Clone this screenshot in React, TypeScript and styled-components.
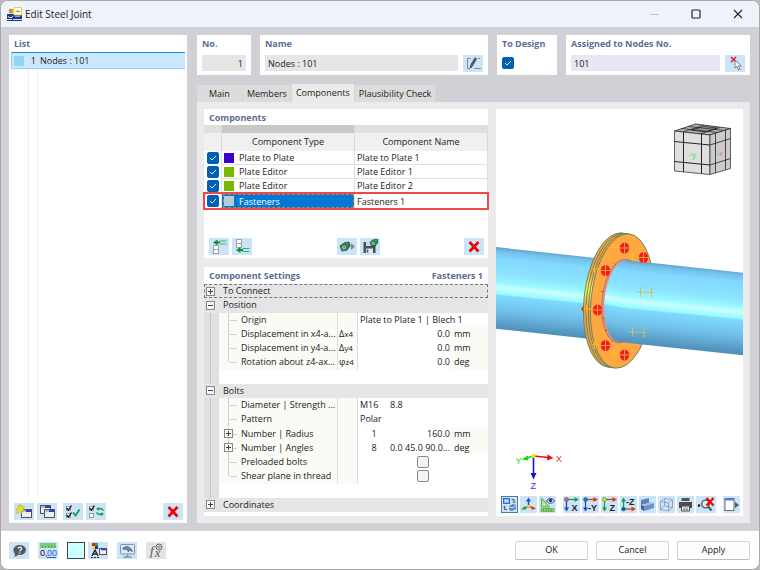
import React from "react";
import styled, { createGlobalStyle, css } from "styled-components";

const Global = createGlobalStyle`
  *, *::before, *::after { box-sizing: border-box; }
  body { margin: 0; background: #b9b8bb; }
  body, button, input, table { font-family: "Open Sans", "Noto Sans", sans-serif; font-size: 9px; line-height: 14px; color: #222; }
  button { padding: 0; border: 0; background: none; }
  svg { display: block; }
`;

/* ---------- window frame ---------- */

const Window = styled.div`
  min-height: 100vh;
  display: flex;
  flex-direction: column;
  background: #fff;
  border: 1px solid #a9a9ad;
  border-radius: 8px;
  overflow: hidden;
`;

const TitleBar = styled.header`
  display: flex;
  align-items: center;
  flex: none;
  height: 26px;
  padding: 0 0 0 6px;
  background: #eef2f9;
`;

const Title = styled.h1`
  margin: 0 auto 0 3px;
  font-size: 10px;
  font-weight: 400;
`;

const CaptionButton = styled.button`
  width: 42px;
  height: 26px;
  display: grid;
  place-items: center;
`;

const Body = styled.main`
  flex: 1;
  display: grid;
  grid-template-columns: 178px 1fr;
  gap: 10px;
  padding: 8px 9px 8px 8px;
  background: #d1d0d6;
`;

const Footer = styled.footer`
  display: flex;
  align-items: center;
  gap: 9px;
  flex: none;
  height: 38px;
  padding: 0 9px 0 8px;
`;

/* ---------- shared parts ---------- */

const Panel = styled.section`
  background: #fff;
  min-width: 0;
  display: flex;
  flex-direction: column;
`;

const Caption = styled.h2`
  display: flex;
  justify-content: space-between;
  margin: 0;
  padding: 1px 5px 0;
  font-size: 9px;
  line-height: 15px;
  font-weight: 700;
  color: #5c6c94;
`;

const Tool = styled.button<{ $tone?: "plain" | "selected" | "disabled"; $narrow?: boolean }>`
  flex: none;
  display: grid;
  place-items: center;
  width: ${(p) => (p.$narrow ? "17px" : "20px")};
  height: 17px;
  background: ${(p) => (p.$tone === "disabled" ? "#e4e4e4" : "#cce4f7")};
  ${(p) => p.$tone === "selected" && css`border: 1px solid #3c7fb1;`}
`;

const Swatch = styled.button`
  width: 18px;
  height: 17px;
  background: #ccffff;
  border: 1px solid #444;
`;

const ToolBar = styled.div`
  display: flex;
  gap: 3px;
  padding: 0 4px 3px 5px;
`;

const CompTools = styled(ToolBar)`
  justify-content: space-between;
  padding-top: 29px;
`;

const ToolGroup = styled.div<{ $gap?: number }>`
  display: flex;
  gap: ${(p) => p.$gap ?? 3}px;
`;

const Spacer = styled.div`
  flex: 1;
`;

const Actions = styled.div`
  display: flex;
  gap: 8px;
`;

const DialogButton = styled.button`
  width: 73px;
  height: 19px;
  background: #fdfdfd;
  border: 1px solid #d3d3d3;
  border-bottom-color: #bdbdbd;
  border-radius: 2px;
`;

const Check = styled.input`
  appearance: none;
  display: block;
  flex: none;
  width: 12px;
  height: 12px;
  margin: 0;
  border: 1px solid #8a8a8a;
  border-radius: 2px;
  background: #f3f3f3;
  &:checked {
    border-color: #0060b8;
    background: #0060b8
      url("data:image/svg+xml,%3Csvg xmlns='http://www.w3.org/2000/svg' viewBox='0 0 10 10'%3E%3Cpath d='M2 5l2 2 4-4' fill='none' stroke='white' stroke-width='.9'/%3E%3C/svg%3E")
      center / 10px 10px no-repeat;
  }
`;

/* ---------- list ---------- */

const NodeList = styled.ul`
  flex: 1;
  list-style: none;
  margin: 1px 2px 8px;
  padding: 0;
  background: linear-gradient(#eee, #eee) 17px 0 / 1px 100% no-repeat,
    linear-gradient(#eee, #eee) 26px 0 / 1px 100% no-repeat;
`;

const NodeItem = styled.li`
  display: grid;
  grid-template-columns: 10px 12px 1fr;
  align-items: center;
  height: 17px;
  padding-left: 2px;
  background: #cce8ff;
  border: 0 solid #9dcdf1;
  border-width: 1px 0 1px 1px;
  border-top-color: #1c8ae0;
`;

const ColorBox = styled.span<{ $color: string }>`
  display: block;
  width: 10px;
  height: 10px;
  background: ${(p) => p.$color};
`;

const Num = styled.span`
  text-align: right;
`;

const ItemName = styled.span`
  padding-left: 4px;
`;

/* ---------- right side ---------- */

const Right = styled.div`
  display: flex;
  flex-direction: column;
  min-width: 0;
`;

const Fields = styled.div`
  display: grid;
  grid-template-columns: 54px 228px 60px 1fr;
  gap: 8px 9px;
  height: 40px;
`;

const FieldLabel = styled.label`
  padding: 1px 5px 0;
  font-weight: 700;
  line-height: 16px;
  color: #5c6c94;
`;

const FieldRow = styled.div`
  display: flex;
  gap: 5px;
  padding: 3px 5px 4px;
  height: 23px;
  align-items: center;
`;

const TextBox = styled.input<{ $tint?: boolean; $right?: boolean }>`
  flex: 1;
  min-width: 0;
  height: 16px;
  padding: 0 3px;
  border: 0;
  background: ${(p) => (p.$tint ? "#e6e7f2" : "#e6e6e6")};
  text-align: ${(p) => (p.$right ? "right" : "left")};
`;

const Tabs = styled.div`
  display: flex;
  align-items: flex-end;
  height: 18px;
  margin-top: 9px;
`;

const Tab = styled.button<{ $active?: boolean; $pad: number }>`
  height: ${(p) => (p.$active ? 18 : 17)}px;
  padding: 0 ${(p) => p.$pad}px;
  background: ${(p) => (p.$active ? "#ebebeb" : "#dcdcdc")};
  border-right: 1px solid #d6d6d6;
`;

const TabPage = styled.div`
  flex: 1;
  display: grid;
  grid-template-columns: 284px 1fr;
  gap: 8px;
  padding: 7px;
  background: #ebebeb;
`;

const Column = styled.div`
  display: flex;
  flex-direction: column;
  gap: 9px;
`;

const CompTable = styled.table`
  width: 100%;
  border-spacing: 0;
  table-layout: fixed;
  th { height: 18px; padding: 0; font-weight: 400; background: #f0f0f0; border-right: 1px solid #dadada; }
  td { height: 14px; padding: 0 3px 0 2px; line-height: 13px; border-right: 1px solid #e0e0e0; border-bottom: 1px solid #e0e0e0; }
  td:first-child { padding: 0 0 0 3px; border-bottom: 0; }
`;

const Marker = styled.tr`
  && th { height: 8px; background: #e0e0e0; }
  && th:nth-child(2) { background: #c8c8c8; }
`;

const CompRow = styled.tr<{ $selected?: boolean }>`
  ${(p) =>
    p.$selected &&
    css`
      outline: 2px solid #f04848;
      outline-offset: -1px;
      && td { height: 16px; border-bottom: 0; }
      td:nth-child(2) { background: #0078d7; color: #fff; outline: 1px dashed #c98240; outline-offset: -2px; }
    `}
`;

const TypeCell = styled.div`
  display: flex;
  align-items: center;
  gap: 5px;
`;

/* ---------- settings tree ---------- */

const SetTable = styled.table`
  width: 100%;
  height: 228px;
  margin: 1px 0 4px;
  border-spacing: 0;
  table-layout: fixed;
  td, th { padding: 0; height: 14px; line-height: 14px; font-weight: 400; text-align: left; white-space: nowrap; }
`;

const Gutter = styled.td`
  background: linear-gradient(#c4c4c4, #c4c4c4) 6px 0 / 1px 100% no-repeat, #e0e0e0;
`;

const GroupHead = styled.th<{ $focus?: boolean }>`
  background: #e5e5e5;
  ${(p) => p.$focus && css`outline: 1px dashed #777; outline-offset: -1px;`}
`;

const GroupLine = styled.div`
  display: flex;
  align-items: center;
  gap: 8px;
  padding-left: 2px;
`;

const Toggle = styled.button`
  flex: none;
  width: 9px;
  height: 9px;
  background: #f6f6f6;
  border: 1px solid #888;
`;

const NameCell = styled.td`
  background: #fafbf5;
`;

const NameLine = styled.div`
  display: flex;
  align-items: center;
`;

const Branch = styled.span<{ $last?: boolean }>`
  flex: none;
  display: flex;
  align-items: center;
  width: 22px;
  height: 14px;
  padding-left: 5px;
  background: linear-gradient(#cfcfcf, #cfcfcf) 9px 0 / 1px ${(p) => (p.$last ? "7px" : "100%")} no-repeat,
    linear-gradient(#cfcfcf, #cfcfcf) 11px 7px / 7px 1px no-repeat;
`;

const SymbolCell = styled.td`
  background: #fafbf5;
  border: 0 solid #dcdcdc;
  border-width: 0 1px;
  && { padding-left: 1px; }
  small { font-size: 8px; }
`;

const Value = styled.td<{ $align?: "right" | "center" }>`
  && { padding: 0 0 0 2px; text-align: ${(p) => p.$align ?? "left"}; }
`;

const Unit = styled.td<{ $filled?: boolean }>`
  && { padding-left: 4px; }
  background: ${(p) => (p.$filled ? "#fafbf5" : "#fff")};
`;

const CheckHolder = styled.span`
  display: flex;
  padding-left: 27px;
`;

/* ---------- 3D view ---------- */

const Scene = styled.svg`
  flex: 1 1 0;
  width: 100%;
  height: 0;
  min-height: 0;
  font-family: "Liberation Sans", sans-serif;
`;

const ViewBar = styled.div`
  display: flex;
  justify-content: space-between;
  padding: 3px 3px 3px 5px;
`;

/* ---------- icons ---------- */

const Ico = ({ children, w = 18 }: { children: React.ReactNode; w?: number }) => (
  <svg width={w} height="15" viewBox={`0 0 ${w} 15`} fill="none" aria-hidden="true">{children}</svg>
);

const AppIcon = () => (
  <svg width="15" height="15" viewBox="0 0 15 15" aria-hidden="true">
    <path d="M0 7h7l8 1v6H0z" fill="#1f3a83" />
    <circle cx="4" cy="4" r="2.4" fill="#d6b13c" />
    <path d="M2 2l2 2 2-2M2 6l2-1 2 1" stroke="#8f7a30" strokeWidth=".7" fill="none" />
    <path d="M7 .5h7.5V8H7z" fill="#fff" stroke="#f5d021" />
    <path d="M8.500 5c1-2 4-2 5 0l-2-.5-.5 1.500-.5-1.500z" fill="#5c7bb0" />
    <path d="M1 9l1 1.500h3L6 9M6 12.500h9M0 12.500h5" stroke="#dfe8f7" fill="none" />
    <path d="M8 9.500h5" stroke="#92abdb" />
  </svg>
);

const CrossIcon = () => (
  <Ico><path d="M4.500 3l9 9.500M13.500 3l-9 9.500" stroke="#f20000" strokeWidth="2.700" /></Ico>
);

const MiniWin = ({ x, y }: { x: number; y: number }) => (
  <g>
    <rect x={x + 0.5} y={y + 0.5} width="10" height="8" fill="#eee" stroke="#555" />
    <path d={`M${x + 1} ${y + 2}h9`} stroke="#b7bcc6" strokeWidth="2" />
    <path d={`M${x + 5} ${y + 2}h5`} stroke="#2a3cc8" strokeWidth="2" />
  </g>
);

const NewIcon = () => (
  <Ico>
    <MiniWin x={6} y={5} />
    <path d="M5.500 0l1 3 3-1-1.500 3 2 1.500-3 .5-.5 3-2-2-3 1.500 1-3L.5 5l3-.5L3 1.500l2 1z" fill="#e7e32a" stroke="#a8a41c" strokeWidth=".5" />
  </Ico>
);
const CopyIcon = () => <Ico><MiniWin x={2} y={1} /><MiniWin x={6} y={5} /></Ico>;

const Tick = ({ y, off }: { y: number; off?: boolean }) => (
  <g>
    <rect x="2.500" y={y + 0.5} width="4" height="4" fill="#fff" stroke="#999" />
    {!off && <path d={`M2.500 ${y + 2}l2 2 3-4.500`} stroke="#111" strokeWidth="1.300" />}
  </g>
);
const CheckAllIcon = () => (
  <Ico><Tick y={2} /><Tick y={9} /><path d="M9 8.500l2.500 3 4-6" stroke="#17a04c" strokeWidth="1.900" /></Ico>
);
const CheckSwapIcon = () => (
  <Ico>
    <Tick y={2} /><Tick y={9} off />
    <path d="M11 5c2-1 4-.5 5.500 1.500M15 10c-2 1-4 .5-5.500-1.500" stroke="#17a04c" strokeWidth="1.400" />
    <path d="M12 3v4L9 5zM14 8v4l3-2z" fill="#17a04c" />
  </Ico>
);

const InsertIcon = ({ below }: { below?: boolean }) => {
  const y = below ? 11 : 3.5;
  return (
    <Ico>
      <path d={below ? "M3.500.5h5v4h-5zM3.500 4.500h5v4h-5z" : "M3.500 6.500h5v4h-5zM3.500 10.500h5v4h-5z"} fill="#fafafa" stroke="#a0a0a0" />
      <path d={`M7 ${y}h3`} stroke="#0a9040" strokeWidth="2.200" />
      <path d={`M9.500 ${y - 1.5}h7M9.500 ${y + 1.5}h7`} stroke="#3cae6c" />
      <path d={`M7.500 ${y - 3}v6L3 ${y}z`} fill="#0a9040" />
    </Ico>
  );
};

const Block = ({ x, y, s = 1 }: { x: number; y: number; s?: number }) => (
  <g transform={`translate(${x} ${y}) scale(${s})`}>
    <path d="M0 4l4-3 5-1 1 4-3 4-5 1z" fill="#2e7d4f" stroke="#184a2d" strokeWidth=".8" />
    <path d="M2 4.500l3-1 1 3-3 1zM6 2l2-.5" fill="#5fae7c" stroke="#9ad4ae" strokeWidth=".6" />
  </g>
);
const BlockIcon = () => <Ico><Block x={2} y={3} /><path d="M13 4l4 3.500-4 3.500z" fill="#7c8791" /></Ico>;
const SaveIcon = () => (
  <Ico>
    <path d="M2.500 3h10l2 2v9h-12z" fill="#4c4f55" />
    <path d="M5 3h6v4H5z" fill="#cfd9e2" /><path d="M5 9.500h7V14H5z" fill="#dce8f2" /><path d="M6.500 10.500v3" stroke="#4c4f55" strokeWidth="1.500" />
    <Block x={9} y={0} s={0.8} />
  </Ico>
);
const EditIcon = () => (
  <Ico>
    <path d="M7 2.500H3.500v10H6M14 2.500h2M10 12.500h7" stroke="#858d94" />
    <path d="M12 2L7.500 9.500" stroke="#55595d" strokeWidth="2.800" /><path d="M5.800 12.500l.5-3.500 2.500 1.500z" fill="#333" />
  </Ico>
);
const PickIcon = () => (
  <Ico>
    <path d="M5 1l5 5M10 1l-5 5" stroke="#e02323" strokeWidth="1.600" />
    <path d="M9 4v8l2-1.500 1.500 3.500 1.500-.7-1.500-3.300h2.800z" fill="#fff" stroke="#666" strokeWidth=".8" />
  </Ico>
);
const HelpIcon = () => (
  <Ico>
    <path d="M9.500 2a6 5 0 1 1-1.500 9.700c-1 1.500-3 2-4 1.800 1-.8 1.200-1.800.8-3C1.500 7 4.500 2 9.500 2z" fill="#55585c" />
    <path d="M8 5.500c.5-2 4-1.500 3.500.5-.3 1-1.500 1-1.700 2.500M9.600 9.500v1.300" stroke="#dcebf7" strokeWidth="1.400" />
  </Ico>
);
const UnitsIcon = () => (
  <Ico>
    <path d="M1 0h16v5H1z" fill="#7ccc7c" /><path d="M3.500 2.500v2.500M6.500 2.500v2.500M9.500 2.500v2.500M12.500 2.500v2.500M15.500 2.500v2.500" stroke="#459a48" strokeWidth=".7" />
    <text x="1" y="13" fontSize="9" fill="#111" fontFamily="Liberation Sans, sans-serif">0,</text>
    <text x="8" y="13" fontSize="9" fill="#2a62c8" fontFamily="Liberation Sans, sans-serif">00</text>
    <path d="M8 14.500h9" stroke="#2a62c8" />
  </Ico>
);
const DisplayIcon = () => (
  <Ico>
    <path d="M3 0h3v3H3z" fill="#e02020" /><path d="M6 0h3v3H6z" fill="#22b422" /><path d="M3 3h3v3H3z" fill="#efdf20" /><path d="M6 3h3v3H6z" fill="#2626d8" />
    <path d="M3 13l3-6 3 6M4 11h4" stroke="#222" strokeWidth="1.300" /><path d="M2 14.500h8" stroke="#222" strokeDasharray="2 1" />
    <rect x="10.500" y="5.500" width="7" height="6" fill="#eee" stroke="#555" /><path d="M12 6.500h5" stroke="#2a3cc8" strokeWidth="1.500" />
  </Ico>
);
const MonitorIcon = () => (
  <Ico>
    <rect x="2.500" y="1.500" width="14" height="9.500" rx="1" fill="#dbe9f5" stroke="#8493a0" />
    <path d="M9.500 11v2.500M5.500 14h8" stroke="#8493a0" strokeWidth="1.300" />
    <path d="M4.500 6C7 2 12.500 3 14.500 8.500l-3-1.500-1 2-1.500-2.500z" fill="#5f8fbc" stroke="#284e78" strokeWidth=".6" />
  </Ico>
);
const FormulaIcon = () => (
  <Ico>
    <text x="3" y="12" fontSize="13" fontStyle="italic" fill="#555" fontFamily="Liberation Serif, serif">f</text>
    <text x="8" y="14" fontSize="12" fontStyle="italic" fill="#555" fontFamily="Liberation Serif, serif">x</text>
    <circle cx="12" cy="4" r="3" stroke="#666" /><path d="M10 4h4M12 2v4" stroke="#777" strokeWidth=".8" />
  </Ico>
);

const SyncIcon = () => (
  <Ico w={15}>
    <rect x="1.500" y="1.500" width="6" height="5" fill="#8db4ff" stroke="#3566d8" /><path d="M3 4h3" stroke="#fff" />
    <path d="M9.500 2.500h2.500v2M5 12.500H2.500v-2" stroke="#555" /><path d="M10.500 4.500h3L12 6.500zM1 10.500h3L2.500 8.500z" fill="#555" />
    <path d="M7 9l4-2 3 1v4l-4 2-3-1z" fill="#6688b8" /><path d="M7 10l3 1 4-2" stroke="#c9d9ee" />
  </Ico>
);
const AxesIcon = () => (
  <Ico w={15}>
    <path d="M7.500 10V3" stroke="#2448c8" strokeWidth="1.400" /><path d="M5 4.500l2.500-4 2.500 4z" fill="#2448c8" />
    <path d="M7.500 9.500L3 11.500" stroke="#17a04c" strokeWidth="1.400" /><path d="M0 12.500l4-3.500 1 3.500z" fill="#17a04c" />
    <path d="M7.500 9.500l5 1.500" stroke="#d84018" strokeWidth="1.400" /><path d="M15 11.500l-4.500 1.500.7-3.800z" fill="#d84018" />
    <circle cx="7.500" cy="9.500" r="1.700" fill="#f5c518" />
  </Ico>
);
const MeasureIcon = () => (
  <Ico w={15}>
    <path d="M1.500 1l8 9h-8z" fill="#a6dd98" stroke="#5cae4c" /><path d="M3.500 5.500l2 2.500h-2z" fill="#e3f3fb" /><path d="M1 11.500h13v3H1z" fill="#8fd380" stroke="#5cae4c" strokeWidth=".8" />
    <path d="M3.500 12v2M6 12v2M8.500 12v2M11 12v2" stroke="#3c8030" strokeWidth=".7" />
    <path d="M6.500 4c2-3.500 6-3.500 8 0-2 3-6 3-8 0z" fill="#eef" stroke="#334a7c" /><circle cx="10.500" cy="3.500" r="1.800" fill="#253a70" />
  </Ico>
);
const AxisView = ({ l, h, v, up, dot }: { l: string; h: string; v: string; up?: boolean; dot: string }) => {
  const y = up ? 12 : 2.5;
  return (
    <Ico w={15}>
      <path d={`M4 ${y}h8`} stroke={h} strokeWidth="1.300" /><path d={`M10.500 ${y - 2.5}l4.500 2.500-4.500 2.500z`} fill={h} />
      <path d="M2.500 3v9" stroke={v} strokeWidth="1.300" /><path d={up ? "M0 4.500L2.500.5l2.500 4z" : "M0 10.500l2.500 4 2.500-4z"} fill={v} />
      <circle cx="2.500" cy={y} r="1.900" fill={dot} stroke={v} strokeWidth=".7" />
      <text x={l.length > 1 ? 5 : 7.5} y={up ? 8 : 13.5} fontSize="9" fontWeight="700" fill="#222" fontFamily="Liberation Sans, sans-serif">{l}</text>
    </Ico>
  );
};
const SolidIcon = () => (
  <Ico w={15}>
    <path d="M1 3l8-2v5l-8 2z" fill="#5f83b8" /><path d="M4 9l10-3v5L4 14z" fill="#6d92c6" /><path d="M1 8l3 1v5l-3-2z" fill="#3f628f" /><path d="M4 9l10-3-3-1-8 3z" fill="#a7c1e2" />
  </Ico>
);
const WireIcon = () => (
  <Ico w={15}>
    <path d="M1.500 4.500l4-3 8 1v8l-4 3.500-8-1.500zM1.500 4.500l8 1.500 4-3.500M9.500 6v8M5.500 1.500v7.500l8 1.500M5.500 9l-4 3.500" stroke="#8f9ac0" strokeWidth=".9" fill="#dfe9f5" fillOpacity=".4" />
  </Ico>
);
const PrintIcon = () => (
  <Ico w={15}>
    <path d="M3.500 1h8v3h-8z" fill="#555" /><path d="M1 5h13v6H1z" fill="#4d4d4d" /><path d="M3.500 9h8v5h-8z" fill="#ececec" stroke="#4d4d4d" /><path d="M5 11h5M5 12.500h5" stroke="#777" strokeWidth=".7" />
  </Ico>
);
const ZoomOffIcon = () => (
  <Ico>
    <circle cx="2" cy="8.500" r="1.200" fill="#111" />
    <circle cx="8.500" cy="7" r="3.800" fill="#dcebf7" stroke="#555" strokeWidth="1.300" /><path d="M11 9.500l3.500 4" stroke="#555" strokeWidth="2" />
    <path d="M9.500 1l7 7.500M16.500 1l-7 7.500" stroke="#f20000" strokeWidth="2.200" />
  </Ico>
);
const PanelIcon = () => (
  <Ico w={15}>
    <rect x="1" y="1.500" width="9" height="12" fill="#fff" stroke="#667" /><path d="M1 2.500h9" stroke="#4b82d8" strokeWidth="2" /><path d="M11 5l4 3-4 3z" fill="#555" />
  </Ico>
);

/* ---------- drawing of the joint ---------- */

const bolts = [[624.5, 248], [643.5, 257.5], [605.5, 270.5], [597.5, 310], [605.5, 345.5], [624.5, 355]];
const pins = [[613.5, 247.5], [632.5, 256.5], [594.5, 269], [586.5, 309], [594.5, 345], [613.5, 353.5]];

const shade = (
  <>
    <stop offset="0" stopColor="#5e9fc6" />
    <stop offset=".05" stopColor="#74c1ec" />
    <stop offset=".14" stopColor="#82d9ff" />
    <stop offset=".32" stopColor="#8ce2ff" />
    <stop offset=".43" stopColor="#98f8ff" />
    <stop offset=".49" stopColor="#c9ffff" />
    <stop offset=".57" stopColor="#96fbff" />
    <stop offset=".59" stopColor="#80dafb" />
    <stop offset=".78" stopColor="#70c0ea" />
    <stop offset="1" stopColor="#508fb8" />
  </>
);

const Joint = () => (
  <Scene viewBox="496 109 247 384" preserveAspectRatio="xMidYMid slice" role="img" aria-label="3D view of the joint">
    <defs>
      <linearGradient id="pipeL" gradientUnits="userSpaceOnUse" x1="496" y1="247" x2="488" y2="328">{shade}</linearGradient>
      <linearGradient id="pipeR" gradientUnits="userSpaceOnUse" x1="626" y1="260" x2="618" y2="342">{shade}</linearGradient>
      <linearGradient id="rim" x1="0" y1="0" x2="0" y2="1">
        <stop offset=".3" stopColor="#f4a23c" /><stop offset=".44" stopColor="#fff04a" /><stop offset=".58" stopColor="#f4a23c" />
      </linearGradient>
    </defs>
    <path d="M480 245.300L600 258.500V340L480 327z" fill="url(#pipeL)" />
    <circle cx="584" cy="309" r="2.500" fill="#e22" />
    <g stroke="#4f7d6b" strokeWidth=".8">
      <ellipse cx="615" cy="300" rx="31" ry="67.500" transform="rotate(6 615 300)" fill="url(#rim)" />
      <ellipse cx="617.500" cy="300.500" rx="31" ry="67.500" transform="rotate(6 617.500 300.500)" fill="url(#rim)" />
      <ellipse cx="620" cy="300.700" rx="31" ry="67.500" transform="rotate(6 620 300.700)" fill="url(#rim)" />
      <ellipse cx="622" cy="301" rx="31" ry="67.500" transform="rotate(6 622 301)" fill="#ffa842" />
    </g>
    <ellipse cx="622" cy="301" rx="20" ry="42" transform="rotate(6 622 301)" fill="#f28a84" stroke="#8b6f6a" strokeWidth=".7" />
    <ellipse cx="623" cy="301" rx="18.500" ry="41" transform="rotate(6 623 301)" fill="url(#pipeR)" />
    <path d="M627 260.200L760 274.500V357L619 342z" fill="url(#pipeR)" />
    <path d="M604 318l-2 .5M603 292l-2-1M609 276l-2-1.500M616 265l-1.500-1.500M607 330l-2 1M613 340l-1.500 1.500" stroke="#805a5a" />
    {bolts.map(([x, y]) => (
      <g key={`${x}-${y}`}>
        <ellipse cx={x} cy={y} rx="4.700" ry="5.600" fill="#f41d1d" />
        <path d={`M${x - 5} ${y}h10M${x} ${y - 5.5}v11`} stroke="#ff9a3c" />
      </g>
    ))}
    {pins.map(([x, y]) => (
      <path key={`${x}-${y}`} d={`M${x - 3} ${y}h9M${x} ${y - 4}v8`} stroke="#ffc21a" strokeWidth=".9" />
    ))}
    <path d="M636.500 291.700l17.500 1M640.500 286.500v10.500M651.500 287.500v10.500M628.500 331.700l17 1M632.500 326.500v10M644 328v10" stroke="#d3bd62" />

    <g stroke="#222" strokeLinejoin="round">
      <path d="M674.500 131l21-7 35 4.500-20.500 6.500z" fill="#b4b4b4" strokeWidth=".8" />
      <path d="M691 130l13-3.500 13 1.500-12 4z" fill="#9a9a9c" strokeWidth=".8" />
      <path d="M681.500 128.500l37 4M688.500 126.500l36 4M683.500 132l20-7M700 134l20-6.500" strokeWidth=".7" />
      <path d="M674.500 131l35.500 4v39.500l-35.500-3.500z" fill="#dfdfdf" strokeWidth=".7" />
      <path d="M710 135l20.500-6.500v40l-20.500 6z" fill="#cbcbcb" strokeWidth=".7" />
      <path d="M683.500 132v40M701.500 134v39.500M674.500 141.500l35.500 3.500M674.500 161.500l35.500 3.500" />
      <path d="M715.500 133.500v39.500M725.500 130v40M710 145l20.500-6.500M710 165l20.500-6.500" strokeWidth=".8" />
    </g>
    <text x="688.500" y="157.500" fontSize="9" fontWeight="700" fill="#7fe08c">-y</text>
    <text x="717" y="156" fontSize="7" fontWeight="700" fill="#e08d8d">-x</text>

    <path d="M533.500 456v18" stroke="#1616c4" strokeWidth="1.600" /><path d="M530.500 473h6l-3 6.500z" fill="#1616c4" />
    <path d="M533.500 456l15 1.500" stroke="#e01010" strokeWidth="1.600" /><path d="M547.500 454.500l6 3.500-6.500 2.500z" fill="#e01010" />
    <path d="M533.500 456l-7 2" stroke="#12d812" strokeWidth="1.600" /><path d="M528 455.500l-6.500 4 7 1z" fill="#12d812" />
    <circle cx="533.500" cy="456" r="2" fill="#f5e510" />
    <text x="556" y="462" fontSize="9" fill="#f03030">X</text>
    <text x="515.500" y="464" fontSize="9" fill="#20dc20">Y</text>
    <text x="530.500" y="488.500" fontSize="9" fill="#3434f0">Z</text>
  </Scene>
);

/* ---------- data ---------- */

const components = [
  { type: "Plate to Plate", name: "Plate to Plate 1", color: "#3a00cc" },
  { type: "Plate Editor", name: "Plate Editor 1", color: "#7ab800" },
  { type: "Plate Editor", name: "Plate Editor 2", color: "#7ab800" },
  { type: "Fasteners", name: "Fasteners 1", color: "#b0ced9", selected: true },
];

type Row = {
  name: string; sym?: [string, string]; wide?: string; v1?: string; v2?: string; v2left?: boolean;
  unit?: string; expand?: boolean; check?: boolean; last?: boolean;
};

const position: Row[] = [
  { name: "Origin", wide: "Plate to Plate 1 | Blech 1" },
  { name: "Displacement in x4-a...", sym: ["Δ", "x4"], v2: "0.0", unit: "mm" },
  { name: "Displacement in y4-a...", sym: ["Δ", "y4"], v2: "0.0", unit: "mm" },
  { name: "Rotation about z4-ax...", sym: ["φ", "z4"], v2: "0.0", unit: "deg", last: true },
];

const boltRows: Row[] = [
  { name: "Diameter | Strength ...", v1: "M16", v2: "8.8", v2left: true },
  { name: "Pattern", wide: "Polar" },
  { name: "Number | Radius", v1: "1", v2: "160.0", unit: "mm", expand: true },
  { name: "Number | Angles", v1: "8", v2: "0.0 45.0 90.0...", unit: "deg", expand: true },
  { name: "Preloaded bolts", check: true },
  { name: "Shear plane in thread", check: true, last: true },
];

const Expander = ({ open, label }: { open?: boolean; label: string }) => (
  <Toggle aria-label={label} aria-expanded={!!open}>
    <svg width="7" height="7" viewBox="0 0 7 7">
      <path d={open ? "M1 3.500h5" : "M1 3.500h5M3.500 1v5"} stroke="#444" />
    </svg>
  </Toggle>
);

const Group = ({ name, open, focus }: { name: string; open?: boolean; focus?: boolean }) => (
  <tr>
    <GroupHead colSpan={6} $focus={focus}>
      <GroupLine><Expander open={open} label={name} />{name}</GroupLine>
    </GroupHead>
  </tr>
);

const Blank = () => (
  <tr><Gutter /><td colSpan={5} /></tr>
);

const SettingRow = ({ r }: { r: Row }) => {
  const id = r.name.replace(/\W+/g, "-");
  return (
    <tr>
      <Gutter />
      <NameCell>
        <NameLine>
          <Branch $last={r.last}>{r.expand && <Expander label={r.name} />}</Branch>
          {r.check ? <label htmlFor={id}>{r.name}</label> : r.name}
        </NameLine>
      </NameCell>
      <SymbolCell>{r.sym && <>{r.sym[0]}<small>{r.sym[1]}</small></>}</SymbolCell>
      {r.wide ? (
        <Value colSpan={3}>{r.wide}</Value>
      ) : r.check ? (
        <><Value /><Value colSpan={2}><CheckHolder><Check id={id} type="checkbox" /></CheckHolder></Value></>
      ) : (
        <>
          <Value $align={r.v1 && r.v1.length === 1 ? "center" : undefined}>{r.v1}</Value>
          <Value $align={r.v2left ? undefined : "right"}>{r.v2}</Value>
          <Unit $filled={!!r.unit}>{r.unit}</Unit>
        </>
      )}
    </tr>
  );
};

export default function App() {
  return (
    <>
      <Global />
      <Window>
        <TitleBar>
          <AppIcon />
          <Title>Edit Steel Joint</Title>
          <CaptionButton aria-label="Minimize" disabled><svg width="9" height="9"><path d="M0 4.500h9" stroke="#c3c6cc" /></svg></CaptionButton>
          <CaptionButton aria-label="Maximize"><svg width="10" height="10"><rect x="1" y="1" width="8" height="8" rx="1" fill="none" stroke="#222" strokeWidth="1.200" /></svg></CaptionButton>
          <CaptionButton aria-label="Close"><svg width="10" height="10"><path d="M1 1l8 8M9 1L1 9" stroke="#222" strokeWidth="1.100" /></svg></CaptionButton>
        </TitleBar>

        <Body>
          <Panel>
            <Caption>List</Caption>
            <NodeList>
              <NodeItem><ColorBox $color="#8fd8f5" /><Num>1</Num><ItemName>Nodes : 101</ItemName></NodeItem>
            </NodeList>
            <ToolBar>
              <ToolGroup><Tool aria-label="New"><NewIcon /></Tool><Tool aria-label="Copy"><CopyIcon /></Tool></ToolGroup>
              <ToolGroup />
              <ToolGroup><Tool aria-label="Select all"><CheckAllIcon /></Tool><Tool aria-label="Invert selection"><CheckSwapIcon /></Tool></ToolGroup>
              <Spacer />
              <Tool aria-label="Delete"><CrossIcon /></Tool>
            </ToolBar>
          </Panel>

          <Right>
            <Fields>
              <Panel>
                <FieldLabel htmlFor="no">No.</FieldLabel>
                <FieldRow><TextBox id="no" readOnly value="1" $right /></FieldRow>
              </Panel>
              <Panel>
                <FieldLabel htmlFor="name">Name</FieldLabel>
                <FieldRow><TextBox id="name" readOnly value="Nodes : 101" /><Tool aria-label="Edit name"><EditIcon /></Tool></FieldRow>
              </Panel>
              <Panel>
                <FieldLabel htmlFor="design">To Design</FieldLabel>
                <FieldRow><Check id="design" type="checkbox" defaultChecked /></FieldRow>
              </Panel>
              <Panel>
                <FieldLabel htmlFor="nodes">Assigned to Nodes No.</FieldLabel>
                <FieldRow><TextBox id="nodes" defaultValue="101" $tint /><Tool aria-label="Pick nodes"><PickIcon /></Tool></FieldRow>
              </Panel>
            </Fields>

            <Tabs role="tablist">
              <Tab role="tab" $pad={12}>Main</Tab>
              <Tab role="tab" $pad={4}>Members</Tab>
              <Tab role="tab" $pad={4} $active aria-selected>Components</Tab>
              <Tab role="tab" $pad={4}>Plausibility Check</Tab>
            </Tabs>

            <TabPage>
              <Column>
                <Panel>
                  <Caption>Components</Caption>
                  <CompTable>
                    <colgroup><col width="18" /><col width="133" /><col /></colgroup>
                    <thead>
                      <Marker><th /><th /><th /></Marker>
                      <tr><th /><th>Component Type</th><th>Component Name</th></tr>
                    </thead>
                    <tbody>
                      {components.map((c) => (
                        <CompRow key={c.name} $selected={c.selected}>
                          <td><Check type="checkbox" defaultChecked aria-label={c.name} /></td>
                          <td><TypeCell><ColorBox $color={c.color} />{c.type}</TypeCell></td>
                          <td>{c.name}</td>
                        </CompRow>
                      ))}
                    </tbody>
                  </CompTable>
                  <CompTools>
                    <ToolGroup><Tool aria-label="Insert above"><InsertIcon /></Tool><Tool aria-label="Insert below"><InsertIcon below /></Tool></ToolGroup>
                    <ToolGroup><Tool aria-label="Library"><BlockIcon /></Tool><Tool aria-label="Save to library"><SaveIcon /></Tool></ToolGroup>
                    <Tool aria-label="Delete component"><CrossIcon /></Tool>
                  </CompTools>
                </Panel>

                <Panel>
                  <Caption><span>Component Settings</span><span>Fasteners 1</span></Caption>
                  <SetTable>
                    <colgroup><col width="15" /><col width="118" /><col width="21" /><col width="30" /><col width="62" /><col /></colgroup>
                    <tbody>
                      <Group name="To Connect" focus />
                      <Group name="Position" open />
                      {position.map((r) => <SettingRow key={r.name} r={r} />)}
                      <Blank />
                      <Group name="Bolts" open />
                      {boltRows.map((r) => <SettingRow key={r.name} r={r} />)}
                      <Blank />
                      <Group name="Coordinates" />
                    </tbody>
                  </SetTable>
                </Panel>
              </Column>

              <Panel>
                <Joint />
                <ViewBar>
                  <ToolGroup $gap={2}>
                    <Tool $narrow $tone="selected" aria-label="Synchronize"><SyncIcon /></Tool>
                    <Tool $narrow aria-label="Axes"><AxesIcon /></Tool>
                    <Tool $narrow aria-label="Measure"><MeasureIcon /></Tool>
                  </ToolGroup>
                  <ToolGroup $gap={2}>
                    <Tool $narrow aria-label="View X"><AxisView l="X" h="#17a04c" v="#2448c8" dot="#f07818" /></Tool>
                    <Tool $narrow aria-label="View -Y"><AxisView l="-Y" h="#d84018" v="#2448c8" dot="#17a04c" /></Tool>
                    <Tool $narrow aria-label="View Z"><AxisView l="Z" h="#d84018" v="#17a04c" dot="#f5e318" /></Tool>
                    <Tool $narrow aria-label="View -Z"><AxisView l="-Z" h="#d84018" v="#17a04c" dot="#2448c8" up /></Tool>
                    <Tool $narrow aria-label="Solid"><SolidIcon /></Tool>
                    <Tool $narrow aria-label="Wireframe"><WireIcon /></Tool>
                    <Tool $narrow aria-label="Print"><PrintIcon /></Tool>
                    <Tool aria-label="Reset zoom"><ZoomOffIcon /></Tool>
                  </ToolGroup>
                  <Tool $narrow aria-label="Show panel"><PanelIcon /></Tool>
                </ViewBar>
              </Panel>
            </TabPage>
          </Right>
        </Body>

        <Footer>
          <Tool aria-label="Help"><HelpIcon /></Tool>
          <Tool aria-label="Units"><UnitsIcon /></Tool>
          <ToolGroup><Swatch aria-label="Color" /><Tool aria-label="Display properties"><DisplayIcon /></Tool></ToolGroup>
          <Tool aria-label="View settings"><MonitorIcon /></Tool>
          <Tool $tone="disabled" disabled aria-label="Formula"><FormulaIcon /></Tool>
          <Spacer />
          <Actions>
            <DialogButton>OK</DialogButton>
            <DialogButton>Cancel</DialogButton>
            <DialogButton>Apply</DialogButton>
          </Actions>
        </Footer>
      </Window>
    </>
  );
}
